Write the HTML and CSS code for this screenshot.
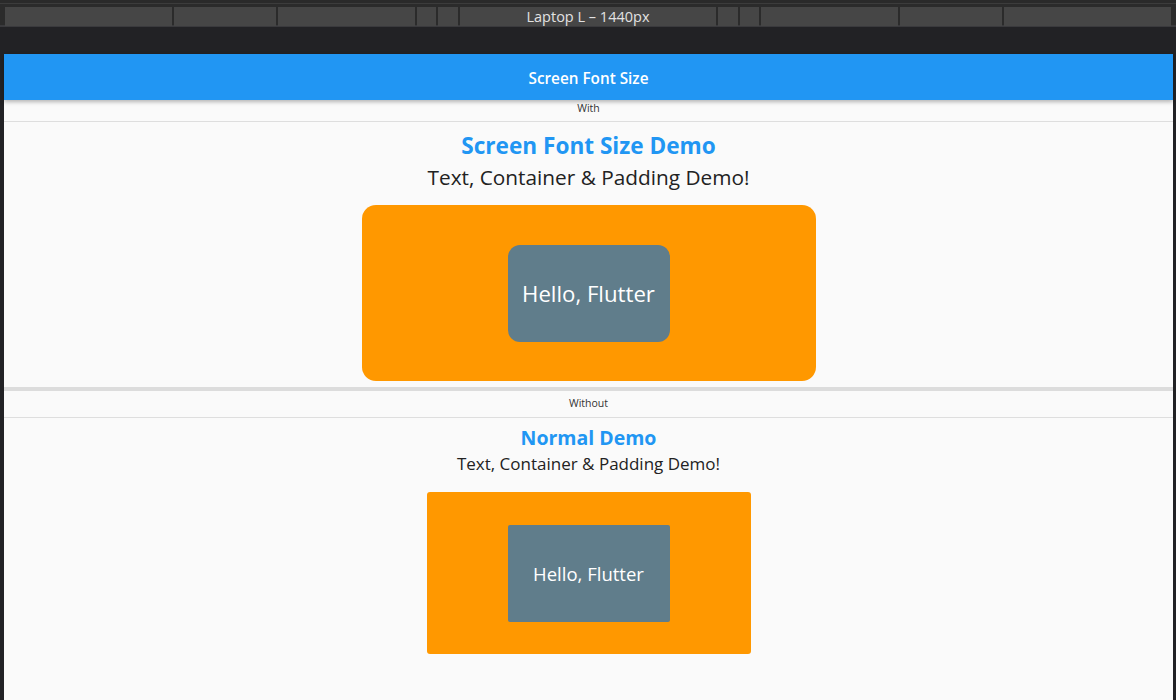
FILE: index.html
```html
<!DOCTYPE html>
<html>
<head>
<meta charset="utf-8">
<link rel="stylesheet" href="styles.css">
</head>
<body>
<div class="toolbar">
  <div class="tabs">
    <div class="tab w167"></div>
    <div class="tab w102"></div>
    <div class="tab w137"></div>
    <div class="tab w19"></div>
    <div class="tab w20"></div>
    <div class="tab w256">Laptop L – 1440px</div>
    <div class="tab w20"></div>
    <div class="tab w19"></div>
    <div class="tab w137"></div>
    <div class="tab w102"></div>
    <div class="tab w167"></div>
  </div>
</div>
<div class="frame">
  <div class="app">
    <header class="appbar">Screen Font Size</header>
    <div class="label">With</div>
    <section class="demo big">
      <h1 class="title">Screen Font Size Demo</h1>
      <p class="sub">Text, Container &amp; Padding Demo!</p>
      <div class="outer">
        <div class="inner">Hello, Flutter</div>
      </div>
    </section>
    <div class="thick"></div>
    <div class="label second">Without</div>
    <section class="demo small">
      <h1 class="title">Normal Demo</h1>
      <p class="sub">Text, Container &amp; Padding Demo!</p>
      <div class="outer">
        <div class="inner">Hello, Flutter</div>
      </div>
    </section>
  </div>
</div>
</body>
</html>
```
FILE: styles.css
```css
html, body {
  margin: 0;
  padding: 0;
  height: 100%;
  background: #222225;
  font-family: "Open Sans", "Noto Sans", sans-serif;
  overflow: hidden;
}
.toolbar {
  background: #2b2b2b;
  border-top: 3px solid #2a2a2a;
  height: 27px;
  box-sizing: border-box;
}
.tabs {
  display: flex;
  gap: 2px;
  padding: 3px 0 0 5px;
  height: 24px;
  box-sizing: border-box;
  border-top: 1px solid #3c3c3c;
  border-bottom: 2px solid #3a3a3d;
}
.tab {
  background: #464646;
  height: 19px;
  color: #e2e2e2;
  font-size: 14.5px;
  line-height: 19px;
  text-align: center;
}
.w167 { width: 167px; }
.w102 { width: 102px; }
.w137 { width: 137px; }
.w19 { width: 19px; }
.w20 { width: 20px; }
.w256 { width: 256px; }
.frame {
  padding: 27px 3px 0 4px;
  height: calc(100% - 27px);
  box-sizing: border-box;
}
.app {
  background: #fafafa;
  height: 100%;
  display: flex;
  flex-direction: column;
  align-items: stretch;
}
.appbar {
  background: #2196f3;
  color: #fff;
  height: 44px;
  padding-top: 2px;
  line-height: 44px;
  text-align: center;
  font-weight: 600;
  font-size: 15.3px;
  box-shadow: 0 2px 4px rgba(0,0,0,0.28);
  position: relative;
  z-index: 1;
}
.label {
  text-align: center;
  font-size: 10.5px;
  color: #333;
  line-height: 14px;
  height: 14px;
  padding-top: 1px;
  padding-bottom: 6px;
  border-bottom: 1px solid #dedede;
}
.label.second {
  padding-top: 5px;
  padding-bottom: 7px;
}
.demo {
  display: flex;
  flex-direction: column;
  align-items: center;
}
.title {
  margin: 0;
  color: #2196f3;
  font-weight: 700;
}
.sub {
  margin: 0;
  color: #222;
}
.outer {
  background: #ff9800;
  display: flex;
  justify-content: center;
  align-items: center;
}
.inner {
  background: #607d8b;
  width: 162px;
  height: 97px;
  display: flex;
  align-items: center;
  justify-content: center;
  color: #fff;
}
.big { padding-top: 11px; }
.big .title { font-size: 22.6px; line-height: 26px; }
.big .sub { font-size: 20.8px; line-height: 30px; margin-top: 3px; }
.big .outer {
  margin-top: 13px;
  width: 454px;
  height: 176px;
  border-radius: 14px;
}
.big .inner { border-radius: 12px; font-size: 22.2px; }
.thick {
  height: 4px;
  background: #dcdcdc;
  margin-top: 6px;
}
.small { padding-top: 8px; }
.small .title { font-size: 19.5px; line-height: 24px; }
.small .sub { font-size: 17px; line-height: 24px; margin-top: 2px; }
.small .outer {
  margin-top: 16px;
  width: 324px;
  height: 162px;
  border-radius: 3px;
}
.small .inner { border-radius: 2px; font-size: 18.5px; }
```
